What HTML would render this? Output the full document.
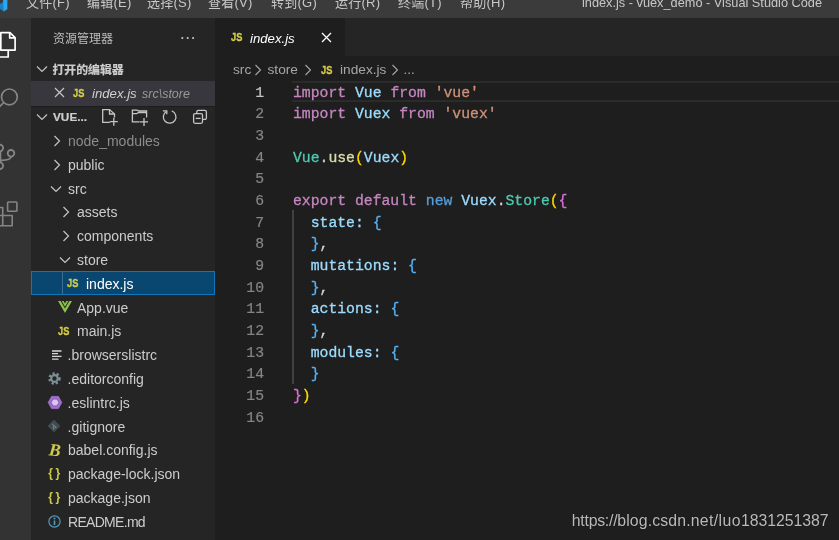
<!DOCTYPE html>
<html lang="zh-CN">
<head>
<meta charset="utf-8">
<title>index.js - vuex_demo - Visual Studio Code</title>
<style>
*{box-sizing:border-box;margin:0;padding:0}
html,body{width:839px;height:540px;overflow:hidden;background:#1e1e1e}
body{position:relative;font-family:"Liberation Sans","Noto Sans CJK SC",sans-serif;color:#ccc;font-size:14px;-webkit-font-smoothing:antialiased;will-change:transform}
.abs{position:absolute}
#titlebar{left:0;top:0;width:839px;height:18px;background:#3b3b3b;overflow:hidden}
#titlebar span{position:absolute;top:-7.5px;font-size:13px;letter-spacing:0.25px;line-height:20px;color:#c8c8c8;white-space:nowrap}
#activity{left:0;top:18px;width:31px;height:522px;background:#333333;overflow:hidden}
#sidebar{left:31px;top:18px;width:184.4px;height:522px;background:#252526;overflow:hidden}
#tabs{left:216px;top:18px;width:623px;height:38px;background:#252526}
#tab{left:0;top:0;width:128.8px;height:38px;background:#1e1e1e}
#crumbs{left:216px;top:56px;width:623px;height:24px;background:#1e1e1e;color:#a6a6a6;font-size:13.7px}
#crumbs span{position:absolute;top:0;line-height:28px;white-space:nowrap}
.js{font-weight:bold;color:#d1cb48;font-size:11.3px;letter-spacing:0;display:inline-block;transform:scaleX(0.82);transform-origin:0 50%;-webkit-text-stroke:0.35px}
/* sidebar */
.row{position:absolute;left:0;width:184.4px;height:23.8px;line-height:23.8px;white-space:nowrap;font-size:14px;color:#cccccc}
.row span{position:absolute;top:1.6px}.row span.js{top:0.9px}
.hdr{font-weight:bold;font-size:12px;color:#cdcdcd;-webkit-text-stroke:0.2px}
svg{position:absolute;overflow:visible}
/* code */
#code{left:216px;top:80.3px;width:623px;height:460px;font-family:"Liberation Mono",monospace;font-size:14.75px}
.ln{position:absolute;left:0;margin-top:2.3px;-webkit-text-stroke:0.2px;width:48px;text-align:right;color:#858585;height:21.67px;line-height:21.67px}
.cl{position:absolute;left:77px;margin-top:2.3px;-webkit-text-stroke:0.3px;height:21.67px;line-height:21.67px;white-space:pre;color:#d4d4d4}
.k{color:#c586c0}.v{color:#9cdcfe}.s{color:#ce9178}.b{color:#569cd6}.t{color:#4ec9b0}.f{color:#dcdcaa}
.p1{color:#ffd700}.p2{color:#da70d6}.p3{color:#55b2f4}
#wm{left:571.8px;top:510.3px;font-size:15.85px;text-shadow:0 0 1px #111;line-height:22px;color:#b9b9b9;white-space:nowrap}
</style>
</head>
<body>
<!-- TITLE BAR -->
<div id="titlebar" class="abs">
  <svg style="left:0;top:0" width="10" height="14" viewBox="0 0 10 14"><path d="M-1 4.5 L3.2 2 L3.6 11.2 L-1 8.5 Z" fill="#1b7fc4"/><path d="M3 -1 H7.4 V9.2 L3.4 11.4 Z" fill="#2aa7f0"/></svg>
  <span style="left:26px">文件(F)</span>
  <span style="left:87px">编辑(E)</span>
  <span style="left:147px">选择(S)</span>
  <span style="left:208px">查看(V)</span>
  <span style="left:271px">转到(G)</span>
  <span style="left:335px">运行(R)</span>
  <span style="left:398px">终端(T)</span>
  <span style="left:460px">帮助(H)</span>
  <span style="left:582px;font-size:12.75px;top:-7.2px;letter-spacing:0">index.js - vuex_demo - Visual Studio Code</span>
</div>

<!-- ACTIVITY BAR -->
<div id="activity" class="abs">
  <!-- files -->
  <svg style="left:0;top:0" width="31" height="60" viewBox="0 18 31 60" fill="none" stroke="#ffffff" stroke-width="1.7" stroke-linejoin="round">
    <path d="M0.8 32.6 H9.9 L15.1 37.7 V50.1 H0.8 Z"/><path d="M9.7 32.8 V37.9 H15"/>
    <path d="M-5 40 V57 H8.2 V50.5"/>
  </svg>
  <!-- search -->
  <svg style="left:0;top:66px" width="31" height="40" viewBox="0 84 31 40" fill="none" stroke="#858585" stroke-width="1.7">
    <circle cx="9.4" cy="96.9" r="7.9"/><path d="M3.8 102.5 L-2 108.3"/>
  </svg>
  <!-- scm -->
  <svg style="left:0;top:120px" width="31" height="50" viewBox="0 138 31 50" fill="none" stroke="#858585" stroke-width="1.8">
    <circle cx="11" cy="153.3" r="3.3"/><circle cx="-0.2" cy="148" r="3.3"/><circle cx="-0.2" cy="165.7" r="3.3"/>
    <path d="M11 156.8 C10.8 160.3 5 160.3 0.8 160.4"/><path d="M0.4 151.3 V162.4"/>
  </svg>
  <!-- extensions -->
  <svg style="left:0;top:180px" width="31" height="50" viewBox="0 198 31 50" fill="none" stroke="#858585" stroke-width="1.6" stroke-linejoin="round">
    <rect x="7.6" y="202" width="9.3" height="9.3" rx="0.8"/>
    <path d="M-6 207.5 H2.7 V215.5 H12.2 V225.8 H-6 M2.7 215.5 V225.8 M-6 215.5 H2.7"/>
  </svg>
</div>

<!-- SIDEBAR -->
<div id="sidebar" class="abs">
  <div class="row" style="top:8.6px;font-size:12px;color:#bbbbbb"><span style="left:22px">资源管理器</span></div>
  <svg style="left:150px;top:18px" width="14" height="4" viewBox="0 0 14 4" fill="#c5c5c5"><circle cx="1.3" cy="2" r="1.1"/><circle cx="6.7" cy="2" r="1.1"/><circle cx="12.1" cy="2" r="1.1"/></svg>

  <!-- open editors header -->
  <div class="row hdr" style="top:39.9px;font-size:11.9px"><span style="left:21.4px">打开的编辑器</span></div>
  <svg style="left:5.5px;top:48px" width="10" height="6" viewBox="0 0 10 6" fill="none" stroke="#c5c5c5" stroke-width="1.2"><path d="M0 0.5 L5 5.5 L10 0.5"/></svg>

  <!-- open editor row -->
  <div class="row" style="top:63.4px;height:24.2px;background:#37373d">
    <svg style="left:24px;top:7px" width="9" height="9" viewBox="0 0 9 9" fill="none" stroke="#c5c5c5" stroke-width="1.2"><path d="M0 0 L9 9 M9 0 L0 9"/></svg>
    <span class="js" style="left:42px;top:0.3px">JS</span>
    <span style="left:61px;top:0.8px;font-style:italic;color:#d0d0d0;font-size:13.2px">index.js</span>
    <span style="left:111px;font-style:italic;font-size:12.5px;color:#9a9a9a">src\store</span>
  </div>

  <!-- folder header -->
  <div class="abs" style="left:0;top:87.6px;width:185px;height:1px;background:#1d1d1d"></div>
  <div class="row hdr" style="top:87.2px;font-size:11.8px"><span style="left:22px;top:0.8px">VUE...</span></div>
  <svg style="left:5.5px;top:96px" width="10" height="6" viewBox="0 0 10 6" fill="none" stroke="#c5c5c5" stroke-width="1.2"><path d="M0 0.5 L5 5.5 L10 0.5"/></svg>
  <!-- toolbar icons: new file, new folder, refresh, collapse -->
  <svg style="left:0;top:0" width="185" height="130" viewBox="0 0 185 130" fill="none" stroke="#c5c5c5" stroke-width="1.3">
    <path d="M78.8 104.4 H71.7 V91.6 H78.5 L83.5 96 V99.6"/><path d="M78.5 91.6 V96 H83.5"/><path d="M82.8 99.7 V107.7 M78.8 103.7 H86.8"/>
    <path d="M108.6 103.9 H101.4 V92.1 H106 L108 93 H115.6 V99.4"/><path d="M101.4 95.7 H105.6 L107.6 94.5 H115.6"/><path d="M113 99.9 V107.9 M109 103.9 H117"/>
    <path d="M135.4 93.5 A6.3 6.3 0 1 0 140.75 92.98"/><path d="M131.9 92.8 H135.8 V96.2"/>
    <rect x="162.6" y="95.6" width="8.9" height="9.7" rx="1.5"/><path d="M165.8 95.6 V93.9 A1.5 1.5 0 0 1 167.3 92.4 H173.9 A1.5 1.5 0 0 1 175.4 93.9 V99.9 A1.5 1.5 0 0 1 173.9 101.4 H171.5"/><path d="M164.7 100.4 H169.6"/>
  </svg>

  <!-- tree -->
  <div class="row" style="top:110.5px;color:#8c8c8c"><span style="left:37px">node_modules</span></div>
  <svg class="chr" style="left:23px;top:118px" width="6" height="10" viewBox="0 0 6 10" fill="none" stroke="#c5c5c5" stroke-width="1.2"><path d="M0.5 0 L5.5 5 L0.5 10"/></svg>

  <div class="row" style="top:134.3px"><span style="left:37px">public</span></div>
  <svg style="left:23px;top:141.8px" width="6" height="10" viewBox="0 0 6 10" fill="none" stroke="#c5c5c5" stroke-width="1.2"><path d="M0.5 0 L5.5 5 L0.5 10"/></svg>

  <div class="row" style="top:158.1px"><span style="left:37px">src</span></div>
  <svg style="left:20px;top:167.5px" width="10" height="6" viewBox="0 0 10 6" fill="none" stroke="#c5c5c5" stroke-width="1.2"><path d="M0 0.5 L5 5.5 L10 0.5"/></svg>

  <div class="row" style="top:181.9px"><span style="left:46px">assets</span></div>
  <svg style="left:32px;top:189.4px" width="6" height="10" viewBox="0 0 6 10" fill="none" stroke="#c5c5c5" stroke-width="1.2"><path d="M0.5 0 L5.5 5 L0.5 10"/></svg>

  <div class="row" style="top:205.7px"><span style="left:46px">components</span></div>
  <svg style="left:32px;top:213.2px" width="6" height="10" viewBox="0 0 6 10" fill="none" stroke="#c5c5c5" stroke-width="1.2"><path d="M0.5 0 L5.5 5 L0.5 10"/></svg>

  <div class="row" style="top:229.5px"><span style="left:46px">store</span></div>
  <svg style="left:29px;top:238.9px" width="10" height="6" viewBox="0 0 10 6" fill="none" stroke="#c5c5c5" stroke-width="1.2"><path d="M0 0.5 L5 5.5 L10 0.5"/></svg>

  <div class="row" style="top:253.3px;background:#094771;border:1px solid #1177bb;line-height:21.8px;color:#ffffff"><span class="js" style="left:35px">JS</span><span style="left:54px">index.js</span></div>
  <div class="abs" style="left:30.5px;top:254px;width:1px;height:22px;background:#3c6d93"></div>

  <div class="row" style="top:277.1px">
    <svg style="left:27px;top:6px" width="14" height="12" viewBox="0 0 14 12"><path d="M0 0 H2.6 L7 7.6 L11.4 0 H14 L7 12 Z" fill="#8dc149"/><path d="M3.7 0 H5.6 L7 2.4 L8.4 0 H10.3 L7 5.7 Z" fill="#8dc149"/></svg>
    <span style="left:46px">App.vue</span></div>

  <div class="row" style="top:300.9px"><span class="js" style="left:27px">JS</span><span style="left:46px">main.js</span></div>

  <div class="row" style="top:324.7px">
    <svg style="left:21px;top:7px" width="10" height="10" viewBox="0 0 10 10" stroke="#d4d7d6" stroke-width="1.3"><path d="M0 1 H9.5 M0 3.7 H6 M0 6.4 H9.5 M0 9.1 H6.5"/></svg>
    <span style="left:36.6px">.browserslistrc</span></div>

  <div class="row" style="top:348.5px">
    <svg style="left:16.8px;top:5.2px" width="13" height="13" viewBox="0 0 13 13"><g fill="none" stroke="#7d8e95" stroke-width="2.4" stroke-dasharray="2.2 1.99"><circle cx="6.5" cy="6.5" r="5"/></g><circle cx="6.5" cy="6.5" r="3.3" fill="none" stroke="#7d8e95" stroke-width="2.2"/></svg>
    <span style="left:36.6px">.editorconfig</span></div>

  <div class="row" style="top:372.3px">
    <svg style="left:16.6px;top:5.6px" width="14" height="13" viewBox="0 0 14 13"><path d="M3.6 0.4 H10.4 L13.8 6.5 L10.4 12.6 H3.6 L0.2 6.5 Z" fill="#a271cf" stroke="#a271cf" stroke-width="0.8" stroke-linejoin="round"/><path d="M5 3 H9 L11 6.5 L9 10 H5 L3 6.5 Z" fill="#dcc4ee" stroke="#7d4fae" stroke-width="0.9" stroke-linejoin="round"/></svg>
    <span style="left:36.6px">.eslintrc.js</span></div>

  <div class="row" style="top:396.1px">
    <svg style="left:17px;top:5.8px" width="12" height="12" viewBox="0 0 12 12"><path d="M6 0 L12 6 L6 12 L0 6 Z" fill="#3f4b50" stroke="#3f4b50" stroke-width="0.8" stroke-linejoin="round"/><path d="M4.2 3.8 L7.6 7.2 M5.6 5.2 V8.4" stroke="#6f7f85" stroke-width="1.1" fill="none"/><circle cx="7.7" cy="7.3" r="0.9" fill="#6f7f85"/><circle cx="5.6" cy="8.5" r="0.9" fill="#6f7f85"/></svg>
    <span style="left:36.6px">.gitignore</span></div>

  <div class="row" style="top:419.9px">
    <span style="left:17.5px;top:1px;font-family:'Liberation Serif',serif;font-style:italic;font-weight:bold;font-size:17.5px;color:#d1cb48;transform:rotate(6deg)">B</span>
    <span style="left:37px">babel.config.js</span></div>

  <div class="row" style="top:443.7px">
    <span style="left:17.2px;font-weight:bold;font-size:12px;color:#d1cb48;letter-spacing:2.6px;top:0.4px">{}</span>
    <span style="left:37px">package-lock.json</span></div>

  <div class="row" style="top:467.5px">
    <span style="left:17.2px;font-weight:bold;font-size:12px;color:#d1cb48;letter-spacing:2.6px;top:0.4px">{}</span>
    <span style="left:37px">package.json</span></div>

  <div class="row" style="top:491.3px">
    <svg style="left:16.8px;top:5.8px" width="13" height="13" viewBox="0 0 13 13"><circle cx="6.5" cy="6.5" r="5.6" fill="none" stroke="#519aba" stroke-width="1.2"/><path d="M6.5 5.5 V10" stroke="#519aba" stroke-width="1.6"/><circle cx="6.5" cy="3.5" r="1" fill="#519aba"/></svg>
    <span style="left:37px;letter-spacing:-0.7px">README.md</span></div>
</div>

<!-- TABS -->
<div id="tabs" class="abs">
  <div class="abs" style="left:-0.6px;top:0;width:2px;height:38px;background:#1e1e1e"></div>
  <div id="tab" class="abs">
    <span class="js abs" style="left:15.2px;top:0;line-height:38.4px;">JS</span>
    <span class="abs" style="left:34px;top:0;line-height:41.5px;font-style:italic;color:#ffffff;font-size:13.2px">index.js</span>
    <svg style="left:105.8px;top:14.8px" width="9" height="9" viewBox="0 0 9 9" fill="none" stroke="#ffffff" stroke-width="1.3"><path d="M0 0 L9 9 M9 0 L0 9"/></svg>
  </div>
</div>

<!-- BREADCRUMBS -->
<div id="crumbs" class="abs">
  <span style="left:17px">src</span>
  <svg style="left:39.3px;top:8.8px" width="6" height="10" viewBox="0 0 6 10" fill="none" stroke="#a6a6a6" stroke-width="1.1"><path d="M0.5 0 L5.5 5 L0.5 10"/></svg>
  <span style="left:51.5px">store</span>
  <svg style="left:88.5px;top:8.8px" width="6" height="10" viewBox="0 0 6 10" fill="none" stroke="#a6a6a6" stroke-width="1.1"><path d="M0.5 0 L5.5 5 L0.5 10"/></svg>
  <span class="js" style="left:105px">JS</span>
  <span style="left:124px">index.js</span>
  <svg style="left:175.5px;top:8.8px" width="6" height="10" viewBox="0 0 6 10" fill="none" stroke="#a6a6a6" stroke-width="1.1"><path d="M0.5 0 L5.5 5 L0.5 10"/></svg>
  <span style="left:187.5px">...</span>
</div>

<!-- CODE -->
<div id="code" class="abs">
  <div class="abs" style="left:76px;top:0.6px;width:547px;height:21.1px;border-top:2.2px solid #2b2b2b;border-bottom:2.3px solid #2b2b2b"></div>
  <div class="abs" style="left:76.3px;top:130px;width:1.3px;height:173.3px;background:#414141"></div>
  <div class="ln" style="top:0;color:#c6c6c6">1</div><div class="cl" style="top:0"><span class="k">import</span> <span class="v">Vue</span> <span class="k">from</span> <span class="s">'vue'</span></div>
  <div class="ln" style="top:21.67px">2</div><div class="cl" style="top:21.67px"><span class="k">import</span> <span class="v">Vuex</span> <span class="k">from</span> <span class="s">'vuex'</span></div>
  <div class="ln" style="top:43.33px">3</div>
  <div class="ln" style="top:65px">4</div><div class="cl" style="top:65px"><span class="t">Vue</span>.<span class="f">use</span><span class="p1">(</span><span class="v">Vuex</span><span class="p1">)</span></div>
  <div class="ln" style="top:86.67px">5</div>
  <div class="ln" style="top:108.33px">6</div><div class="cl" style="top:108.33px"><span class="k">export</span> <span class="k">default</span> <span class="b">new</span> <span class="v">Vuex</span>.<span class="t">Store</span><span class="p1">(</span><span class="p2">{</span></div>
  <div class="ln" style="top:130px">7</div><div class="cl" style="top:130px">  <span class="v">state</span><span class="v">:</span> <span class="p3">{</span></div>
  <div class="ln" style="top:151.67px">8</div><div class="cl" style="top:151.67px">  <span class="p3">}</span>,</div>
  <div class="ln" style="top:173.33px">9</div><div class="cl" style="top:173.33px">  <span class="v">mutations</span><span class="v">:</span> <span class="p3">{</span></div>
  <div class="ln" style="top:195px">10</div><div class="cl" style="top:195px">  <span class="p3">}</span>,</div>
  <div class="ln" style="top:216.67px">11</div><div class="cl" style="top:216.67px">  <span class="v">actions</span><span class="v">:</span> <span class="p3">{</span></div>
  <div class="ln" style="top:238.33px">12</div><div class="cl" style="top:238.33px">  <span class="p3">}</span>,</div>
  <div class="ln" style="top:260px">13</div><div class="cl" style="top:260px">  <span class="v">modules</span><span class="v">:</span> <span class="p3">{</span></div>
  <div class="ln" style="top:281.67px">14</div><div class="cl" style="top:281.67px">  <span class="p3">}</span></div>
  <div class="ln" style="top:303.33px">15</div><div class="cl" style="top:303.33px"><span class="p2">}</span><span class="p1">)</span></div>
  <div class="ln" style="top:325px">16</div>
</div>

<!-- WATERMARK -->
<div id="wm" class="abs"><span style="letter-spacing:-0.26px">https://</span><span style="letter-spacing:0.12px">blog.csdn.n</span><span style="letter-spacing:0.45px">et/luo</span><span style="letter-spacing:-0.07px">1831251387</span></div>
</body>
</html>
